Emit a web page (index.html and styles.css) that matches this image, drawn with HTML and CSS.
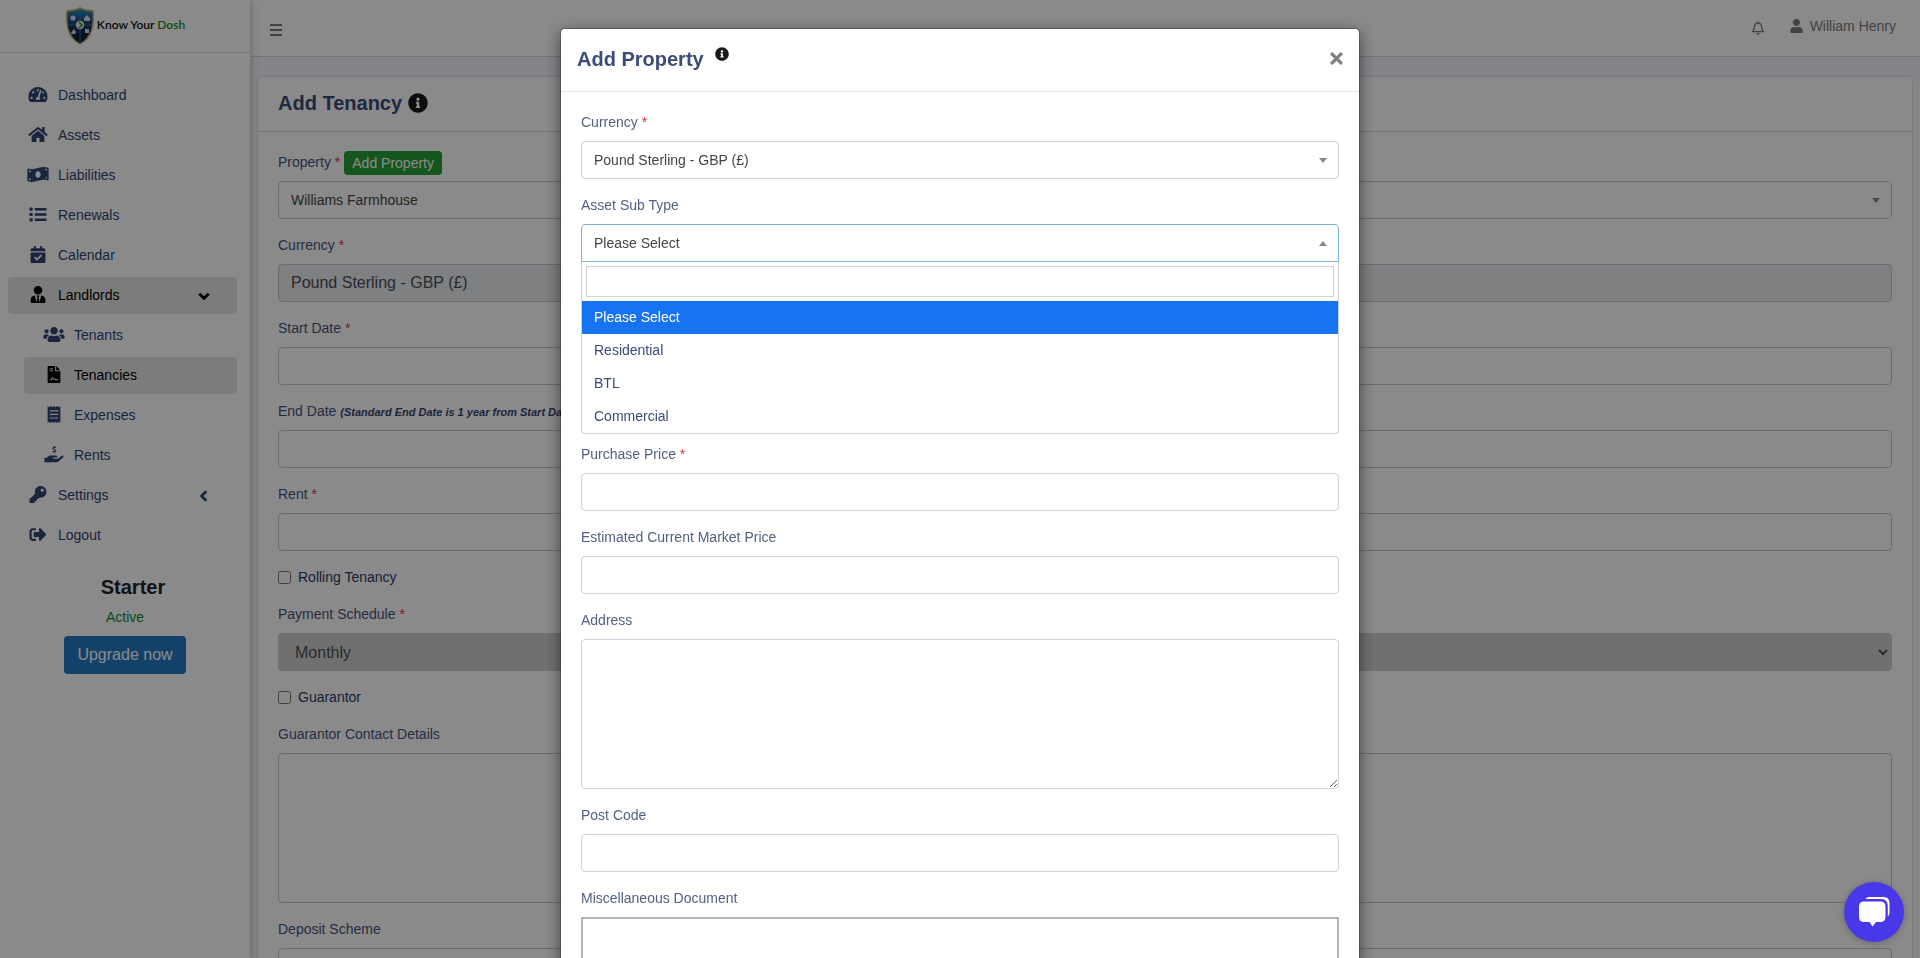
FILE: index.html
```html
<!DOCTYPE html>
<html lang="en">
  <head>
    <meta charset="utf-8" />
    <meta name="viewport" content="width=device-width, initial-scale=1" />
    <title>Know Your Dosh | Add Tenancy</title>
    <link rel="stylesheet" href="styles.css" />
  </head>
  <body class="modal-open">
    <svg class="sprite" aria-hidden="true">
      <symbol id="i-info" viewBox="0 0 512 512">
        <path d="M256 8C119.043 8 8 119.083 8 256c0 136.997 111.043 248 248 248s248-111.003 248-248C504 119.083 392.957 8 256 8zm0 110c23.196 0 42 18.804 42 42s-18.804 42-42 42-42-18.804-42-42 18.804-42 42-42zm56 254c0 6.627-5.373 12-12 12h-88c-6.627 0-12-5.373-12-12v-24c0-6.627 5.373-12 12-12h12v-64h-12c-6.627 0-12-5.373-12-12v-24c0-6.627 5.373-12 12-12h64c6.627 0 12 5.373 12 12v100h12c6.627 0 12 5.373 12 12v24z" />
      </symbol>
    </svg>

    <div class="wrapper">
      <!-- Sidebar -->
      <aside class="sidebar">
        <a href="#" class="brand">
          <svg class="brand-logo" viewBox="0 0 30 38">
            <defs>
              <linearGradient id="shield" x1="0" y1="0" x2="0" y2="1">
                <stop offset="0" stop-color="#2b8fc4" />
                <stop offset="0.5" stop-color="#16335f" />
                <stop offset="1" stop-color="#0c1430" />
              </linearGradient>
            </defs>
            <path d="M15 1c4 2 8 3 13 3 1 13 0 26-13 33C2 30 1 17 2 4c5 0 9-1 13-3z" fill="url(#shield)" stroke="#cdb568" stroke-width="1.4" />
            <path d="M15 2v34M3 18h24" stroke="#4d9dbd" stroke-width="0.6" />
            <circle cx="8" cy="11" r="2.6" fill="#c9dcf5" />
            <path d="M19 11l3-3 3 3v3h-6z" fill="#c9dcf5" />
            <path d="M6 26l3-4 2 3-1 2H6z" fill="#c9dcf5" />
            <rect x="20" y="22" width="4" height="4" fill="#c9dcf5" />
            <circle cx="15" cy="18" r="4.2" fill="#e4efe0" />
            <path d="M14 15l3 3-3 3" fill="none" stroke="#3a8a34" stroke-width="1.6" />
          </svg>
          <span class="brand-text">Know Your <span class="brand-green">Dosh</span></span>
        </a>

        <nav>
          <ul class="nav">
            <li>
              <a href="#" class="nav-link">
                <svg class="nav-icon" viewBox="0 0 576 512"><path d="M288 32C128.94 32 0 160.94 0 320c0 52.8 14.25 102.26 39.06 144.8 5.61 9.62 16.3 15.2 27.44 15.2h443c11.14 0 21.83-5.58 27.44-15.2C561.75 422.26 576 372.8 576 320c0-159.06-128.94-288-288-288zm0 64c14.71 0 26.58 10.13 30.32 23.65-1.11 2.26-2.64 4.23-3.45 6.67l-9.22 27.67c-5.13 3.49-10.97 6.01-17.64 6.01-17.67 0-32-14.33-32-32S270.33 96 288 96zM96 384c-17.67 0-32-14.33-32-32s14.33-32 32-32 32 14.33 32 32-14.33 32-32 32zm48-160c-17.67 0-32-14.33-32-32s14.33-32 32-32 32 14.33 32 32-14.33 32-32 32zm246.77-72.41l-61.33 184C343.13 347.33 352 364.54 352 384c0 11.72-3.38 22.55-8.88 32H232.88c-5.5-9.45-8.88-20.28-8.88-32 0-33.94 26.5-61.43 59.9-63.59l61.34-184.01c4.17-12.56 17.73-19.45 30.36-15.17 12.57 4.19 19.35 17.79 15.17 30.36zm14.66 57.2l15.52-46.55c3.47-1.29 7.13-2.23 11.05-2.23 17.67 0 32 14.33 32 32s-14.33 32-32 32c-11.38-.01-20.89-6.28-26.57-15.22zM480 384c-17.67 0-32-14.33-32-32s14.33-32 32-32 32 14.33 32 32-14.33 32-32 32z" /></svg>
                <span>Dashboard</span>
              </a>
            </li>
            <li>
              <a href="#" class="nav-link">
                <svg class="nav-icon" viewBox="0 0 576 512"><path d="M280.37 148.26L96 300.11V464a16 16 0 0 0 16 16l112.06-.29a16 16 0 0 0 15.92-16V368a16 16 0 0 1 16-16h64a16 16 0 0 1 16 16v95.64a16 16 0 0 0 16 16.05L464 480a16 16 0 0 0 16-16V300L295.67 148.26a12.19 12.19 0 0 0-15.3 0zM571.6 251.47L488 182.56V44.05a12 12 0 0 0-12-12h-56a12 12 0 0 0-12 12v72.61L318.47 43a48 48 0 0 0-61 0L4.34 251.47a12 12 0 0 0-1.6 16.9l25.5 31A12 12 0 0 0 45.15 301l235.22-193.74a12.19 12.19 0 0 1 15.3 0L530.9 301a12 12 0 0 0 16.9-1.6l25.5-31a12 12 0 0 0-1.7-16.93z" /></svg>
                <span>Assets</span>
              </a>
            </li>
            <li>
              <a href="#" class="nav-link">
                <svg class="nav-icon" viewBox="0 0 640 512"><path d="M621.16 54.46C582.37 38.19 543.55 32 504.75 32c-123.17-.01-246.33 62.34-369.5 62.34-30.89 0-61.76-3.92-92.65-13.72-3.47-1.1-6.95-1.62-10.35-1.62C15.04 79 0 92.32 0 110.81v317.26c0 12.63 7.23 24.6 18.84 29.46C57.63 473.81 96.45 480 135.25 480c123.17 0 246.34-62.35 369.51-62.35 30.89 0 61.76 3.92 92.65 13.72 3.47 1.1 6.95 1.62 10.35 1.62 17.21 0 32.25-13.32 32.25-31.81V83.93c-.01-12.64-7.24-24.6-18.85-29.47zM48 132.22c20.12 5.04 41.12 7.57 62.72 8.93C104.84 170.54 79 192.69 48 192.69v-60.47zm0 285v-47.78c34.37 0 62.18 27.27 63.71 61.4-22.53-1.81-43.59-6.31-63.71-13.62zM320 352c-44.19 0-80-42.99-80-96 0-53.02 35.82-96 80-96s80 42.98 80 96c0 53.03-35.83 96-80 96zm272 27.78c-17.52-4.39-35.71-6.85-54.32-8.44 5.87-26.08 27.5-45.88 54.32-49.28v57.72zm0-236.11c-30.89-3.91-54.86-29.7-55.81-61.55 19.54 2.17 38.09 6.23 55.81 12.66v48.89z" /></svg>
                <span>Liabilities</span>
              </a>
            </li>
            <li>
              <a href="#" class="nav-link">
                <svg class="nav-icon" viewBox="0 0 512 512"><path d="M16 48h64a16 16 0 0 1 16 16v64a16 16 0 0 1-16 16H16a16 16 0 0 1-16-16V64a16 16 0 0 1 16-16zm0 160h64a16 16 0 0 1 16 16v64a16 16 0 0 1-16 16H16a16 16 0 0 1-16-16v-64a16 16 0 0 1 16-16zm0 160h64a16 16 0 0 1 16 16v64a16 16 0 0 1-16 16H16a16 16 0 0 1-16-16v-64a16 16 0 0 1 16-16zM160 58h336a16 16 0 0 1 16 16v44a16 16 0 0 1-16 16H160V58zm0 160h336a16 16 0 0 1 16 16v44a16 16 0 0 1-16 16H160v-76zm0 160h336a16 16 0 0 1 16 16v44a16 16 0 0 1-16 16H160v-76z" /></svg>
                <span>Renewals</span>
              </a>
            </li>
            <li>
              <a href="#" class="nav-link">
                <svg class="nav-icon" viewBox="0 0 448 512"><path fill-rule="evenodd" d="M436 160H12c-6.627 0-12-5.373-12-12v-36c0-26.51 21.49-48 48-48h48V12c0-6.627 5.373-12 12-12h40c6.627 0 12 5.373 12 12v52h128V12c0-6.627 5.373-12 12-12h40c6.627 0 12 5.373 12 12v52h48c26.51 0 48 21.49 48 48v36c0 6.627-5.373 12-12 12zM12 192h424c6.627 0 12 5.373 12 12v260c0 26.51-21.49 48-48 48H48c-26.51 0-48-21.49-48-48V204c0-6.627 5.373-12 12-12zM104 352l90 92 152-150-36-37-116 114-53-54z" /></svg>
                <span>Calendar</span>
              </a>
            </li>
            <li>
              <a href="#" class="nav-link active">
                <svg class="nav-icon" viewBox="0 0 448 512"><path d="M224 256c70.7 0 128-57.3 128-128S294.7 0 224 0 96 57.3 96 128s57.3 128 128 128zm95.8 32.6L272 480l-32-136 32-56h-96l32 56-32 136-47.8-191.4C56.9 292 0 350.3 0 422.4V464c0 26.5 21.5 48 48 48h352c26.5 0 48-21.5 48-48v-41.6c0-72.1-56.9-130.4-128.2-133.8z" /></svg>
                <span>Landlords</span>
                <svg class="nav-arrow" viewBox="0 0 12 12"><path d="M2 4l4 4 4-4" /></svg>
              </a>
              <ul class="nav nav-sub">
                <li>
                  <a href="#" class="nav-link">
                    <svg class="nav-icon" viewBox="0 0 640 512"><path d="M96 224c35.3 0 64-28.7 64-64s-28.7-64-64-64-64 28.7-64 64 28.7 64 64 64zm448 0c35.3 0 64-28.7 64-64s-28.7-64-64-64-64 28.7-64 64 28.7 64 64 64zm32 32h-64c-17.6 0-33.5 7.1-45.1 18.6 40.3 22.1 68.9 62 75.1 109.4h66c17.7 0 32-14.3 32-32v-32c0-35.3-28.7-64-64-64zm-256 0c61.9 0 112-50.1 112-112S381.9 32 320 32 208 82.1 208 144s50.1 112 112 112zm76.8 32h-8.3c-20.8 10-43.9 16-68.5 16s-47.6-6-68.5-16h-8.3C179.6 288 128 339.6 128 403.2V432c0 26.5 21.5 48 48 48h288c26.5 0 48-21.5 48-48v-28.8c0-63.6-51.6-115.2-115.2-115.2zm-223.7-13.4C161.5 263.1 145.6 256 128 256H64c-35.3 0-64 28.7-64 64v32c0 17.7 14.3 32 32 32h65.9c6.3-47.4 34.9-87.3 75.2-109.4z" /></svg>
                    <span>Tenants</span>
                  </a>
                </li>
                <li>
                  <a href="#" class="nav-link active">
                    <svg class="nav-icon" viewBox="0 0 384 512"><path fill-rule="evenodd" d="M0 24A24 24 0 0 1 24 0h200v136a24 24 0 0 0 24 24h136v328a24 24 0 0 1-24 24H24a24 24 0 0 1-24-24zM256 0l128 128H256zM64 64v32h96V64zm0 64v32h96v-32zM64 400v32h60l22-58 28 50 34-22 20 30h92v-32h-74l-30-38-36 24-40-70-36 84z" /></svg>
                    <span>Tenancies</span>
                  </a>
                </li>
                <li>
                  <a href="#" class="nav-link">
                    <svg class="nav-icon" viewBox="0 0 384 512"><path fill-rule="evenodd" d="M0 0l48 36L96 0l48 36 48-36 48 36 48-36 48 36 48-36v512l-48-36-48 36-48-36-48 36-48-36-48 36-48-36-48 36zM64 128v34h256v-34zm0 108v34h256v-34zm0 108v34h256v-34z" /></svg>
                    <span>Expenses</span>
                  </a>
                </li>
                <li>
                  <a href="#" class="nav-link">
                    <svg class="nav-icon" viewBox="0 0 576 512"><path d="M8 352h56l46-38c24-19 52-29 82-29h160c20 0 35 18 32 38-3 16-18 26-34 26h-78a16 16 0 0 0 0 32h118c14 0 28-5 39-14l93-74c14-11 34-11 46 1 13 13 11 34-3 45L414 472a64 64 0 0 1-40 14H8a8 8 0 0 1-8-8V360a8 8 0 0 1 8-8z" /><path d="M338 52c-20-16-82-18-84 20-2 44 88 26 86 70-2 36-64 38-90 16M296 0v44M296 168v48" fill="none" stroke="currentColor" stroke-width="34" /></svg>
                    <span>Rents</span>
                  </a>
                </li>
              </ul>
            </li>
            <li>
              <a href="#" class="nav-link">
                <svg class="nav-icon" viewBox="0 0 512 512"><path d="M512 176.001C512 273.203 433.202 352 336 352c-11.22 0-22.19-1.062-32.827-3.069l-24.012 27.014A23.999 23.999 0 0 1 261.223 384H224v40c0 13.255-10.745 24-24 24h-40v40c0 13.255-10.745 24-24 24H24c-13.255 0-24-10.745-24-24v-78.059c0-6.365 2.529-12.47 7.029-16.971l161.802-161.802C163.108 213.814 160 195.271 160 176 160 78.798 238.797.001 335.999 0 433.488-.001 512 78.511 512 176.001zM336 128c0 26.51 21.49 48 48 48s48-21.49 48-48-21.49-48-48-48-48 21.49-48 48z" /></svg>
                <span>Settings</span>
                <svg class="nav-arrow" viewBox="0 0 12 12"><path d="M8 2L4 6l4 4" /></svg>
              </a>
            </li>
            <li>
              <a href="#" class="nav-link">
                <svg class="nav-icon" viewBox="0 0 512 512"><path d="M497 273L329 441c-15 15-41 4.5-41-17v-96H152c-13.3 0-24-10.7-24-24v-96c0-13.3 10.7-24 24-24h136V88c0-21.4 25.9-32 41-17l168 168c9.3 9.4 9.3 24.6 0 34zM192 436v-40c0-6.6-5.4-12-12-12H96c-17.7 0-32-14.3-32-32V160c0-17.7 14.3-32 32-32h84c6.6 0 12-5.4 12-12V76c0-6.6-5.4-12-12-12H96c-53 0-96 43-96 96v192c0 53 43 96 96 96h84c6.6 0 12-5.4 12-12z" /></svg>
                <span>Logout</span>
              </a>
            </li>
          </ul>
        </nav>

        <div class="plan">
          <h2 class="plan-name">Starter</h2>
          <p class="plan-status">Active</p>
          <button type="button" class="btn btn-primary">Upgrade now</button>
        </div>
      </aside>

      <div class="main">
        <!-- Navbar -->
        <header class="topbar">
          <button type="button" class="icon-btn" aria-label="Toggle menu">
            <svg class="menu-icon" viewBox="0 0 12 12"><path d="M0 1h12M0 6h12M0 11h12" stroke="currentColor" stroke-width="2" /></svg>
          </button>
          <div class="topbar-right">
            <button type="button" class="icon-btn" aria-label="Notifications">
              <svg class="bell-icon" viewBox="0 0 448 512"><path d="M439.39 362.29c-19.32-20.76-55.47-51.99-55.47-154.29 0-77.7-54.48-139.9-127.94-155.16V32c0-17.67-14.32-32-31.98-32s-31.98 14.33-31.98 32v20.84C118.56 68.1 64.08 130.3 64.08 208c0 102.3-36.15 133.53-55.47 154.29-6 6.45-8.66 14.16-8.61 21.71.11 16.4 12.98 32 32.1 32h383.8c19.12 0 32-15.6 32.1-32 .05-7.55-2.61-15.27-8.61-21.71zM67.53 368c21.22-27.97 44.42-74.33 44.53-159.42 0-.2-.06-.38-.06-.58 0-61.86 50.14-112 112-112s112 50.14 112 112c0 .2-.06.38-.06.58.11 85.1 23.31 131.46 44.53 159.42H67.53zM224 512c35.32 0 63.97-28.65 63.97-64H160.03c0 35.35 28.65 64 63.97 64z" /></svg>
            </button>
            <a href="#" class="user-link">
              <svg class="user-icon" viewBox="0 0 448 512"><path d="M224 256c70.7 0 128-57.3 128-128S294.7 0 224 0 96 57.3 96 128s57.3 128 128 128zm89.6 32h-16.7c-22.2 10.2-46.9 16-72.9 16s-50.6-5.8-72.9-16h-16.7C60.2 288 0 348.2 0 422.4V464c0 26.5 21.5 48 48 48h352c26.5 0 48-21.5 48-48v-41.6c0-74.2-60.2-134.4-134.4-134.4z" /></svg>
              William Henry
            </a>
          </div>
        </header>

        <!-- Tenancy form -->
        <section class="card">
          <div class="card-header">
            <h1 class="title">Add Tenancy</h1>
            <svg class="info-icon"><use href="#i-info" /></svg>
          </div>
          <form class="card-body">
            <div class="form-group">
              <div class="label-row">
                <label for="property">Property <span class="req">*</span></label>
                <button type="button" class="btn btn-success btn-xs">Add Property</button>
              </div>
              <div class="select-wrap">
                <select id="property" class="form-control select2">
                  <option>Williams Farmhouse</option>
                </select>
              </div>
            </div>
            <div class="form-group">
              <label for="currency">Currency <span class="req">*</span></label>
              <input id="currency" class="form-control" type="text" value="Pound Sterling - GBP (£)" readonly />
            </div>
            <div class="form-group">
              <label for="startDate">Start Date <span class="req">*</span></label>
              <input id="startDate" class="form-control" type="text" />
            </div>
            <div class="form-group">
              <label for="endDate">End Date <em class="hint">(Standard End Date is 1 year from Start Date)</em></label>
              <input id="endDate" class="form-control" type="text" />
            </div>
            <div class="form-group">
              <label for="rent">Rent <span class="req">*</span></label>
              <input id="rent" class="form-control" type="text" />
            </div>
            <div class="form-group form-check">
              <input id="rolling" type="checkbox" />
              <label for="rolling">Rolling Tenancy</label>
            </div>
            <div class="form-group">
              <label for="schedule">Payment Schedule <span class="req">*</span></label>
              <select id="schedule" class="form-control schedule">
                <option>Monthly</option>
              </select>
            </div>
            <div class="form-group form-check">
              <input id="guarantor" type="checkbox" />
              <label for="guarantor">Guarantor</label>
            </div>
            <div class="form-group">
              <label for="guarantorDetails">Guarantor Contact Details</label>
              <textarea id="guarantorDetails" class="form-control"></textarea>
            </div>
            <div class="form-group">
              <label for="deposit">Deposit Scheme</label>
              <input id="deposit" class="form-control" type="text" />
            </div>
          </form>
        </section>
      </div>
    </div>

    <!-- Add property modal -->
    <div class="modal">
      <div class="modal-dialog" role="dialog" aria-labelledby="modalTitle">
        <div class="modal-header">
          <h2 class="title" id="modalTitle">Add Property</h2>
          <svg class="info-icon info-icon-sm"><use href="#i-info" /></svg>
          <button type="button" class="icon-btn close" aria-label="Close">
            <svg class="close-icon" viewBox="0 0 12 12"><path d="M1 1l10 10M11 1L1 11" /></svg>
          </button>
        </div>
        <form class="modal-body">
          <div class="form-group">
            <label for="mCurrency">Currency <span class="req">*</span></label>
            <div class="select-wrap">
              <select id="mCurrency" class="form-control select2">
                <option>Pound Sterling - GBP (£)</option>
              </select>
            </div>
          </div>
          <div class="form-group open">
            <label for="subType">Asset Sub Type</label>
            <div class="select-wrap">
              <select id="subType" class="form-control select2">
                <option>Please Select</option>
              </select>
            </div>
            <div class="dropdown">
              <div class="dropdown-search">
                <input type="search" aria-label="Search asset sub type" />
              </div>
              <ul class="dropdown-list" role="listbox" aria-label="Asset Sub Type">
                <li role="option" class="highlighted" aria-selected="true">Please Select</li>
                <li role="option">Residential</li>
                <li role="option">BTL</li>
                <li role="option">Commercial</li>
              </ul>
            </div>
          </div>
          <div class="form-group">
            <label for="price">Purchase Price <span class="req">*</span></label>
            <input id="price" class="form-control" type="text" />
          </div>
          <div class="form-group">
            <label for="marketPrice">Estimated Current Market Price</label>
            <input id="marketPrice" class="form-control" type="text" />
          </div>
          <div class="form-group">
            <label for="address">Address</label>
            <textarea id="address" class="form-control"></textarea>
          </div>
          <div class="form-group">
            <label for="postCode">Post Code</label>
            <input id="postCode" class="form-control" type="text" />
          </div>
          <div class="form-group">
            <label id="miscLabel">Miscellaneous Document</label>
            <div class="dropzone" role="group" aria-labelledby="miscLabel"></div>
          </div>
        </form>
      </div>
    </div>

    <button type="button" class="chat" aria-label="Open chat">
      <svg class="chat-icon" viewBox="0 0 32 32">
        <path d="M7.500 3C8.500 1.500 10 1 12 1h13c4.500 0 6.500 2 6.500 6.500v8c0 2.500-.5 4-1.700 5V10.500c0-5-2.300-7.500-7.300-7.500z" />
        <path d="M7 5.500h14.500c4.500 0 6 1.500 6 6v8.500c0 4.500-1.500 6-6 6H18L14.500 30.500 11.500 26H7c-4.500 0-6-1.500-6-6v-8.500c0-4.500 1.500-6 6-6z" />
      </svg>
    </button>
  </body>
</html>
```
FILE: styles.css
```css
* {
  box-sizing: border-box;
}

body {
  margin: 0;
  font-family: "Liberation Sans", Arial, sans-serif;
  font-size: 14px;
  line-height: 21px;
  color: #3a4c78;
  background-color: #f4f6fc;
}

.modal-open {
  height: 100vh;
  overflow: hidden;
}

h1,
h2,
p,
ul {
  margin: 0;
  padding: 0;
}

ul {
  list-style: none;
}

a {
  color: inherit;
  text-decoration: none;
}

button,
input,
select,
textarea {
  font-family: inherit;
}

.sprite {
  display: none;
}

.wrapper {
  display: flex;
  height: 100vh;
  overflow: hidden;
}

/* Sidebar */
.sidebar {
  flex: 0 0 250px;
  background-color: #fff;
  box-shadow: 0 0 8px rgba(40, 50, 90, 0.35);
  z-index: 1;
}

.brand {
  display: flex;
  justify-content: center;
  align-items: center;
  gap: 2px;
  height: 53px;
  border-bottom: 1px solid #d8dadd;
}

.brand-logo {
  width: 30px;
  height: 38px;
}

.brand-text {
  padding-bottom: 4px;
  font-family: Lato, sans-serif;
  font-size: 12px;
  font-weight: 600;
  color: #111;
}

.brand-green {
  color: #128a12;
}

.nav {
  padding: 24px 13px 0 8px;
}

.nav-sub {
  padding: 0 0 0 16px;
}

.nav-link {
  display: flex;
  align-items: center;
  gap: 8px;
  height: 37px;
  margin-bottom: 3px;
  padding: 0 26px 0 18px;
  border-radius: 4px;
  color: #2f4574;
}

.nav-link.active {
  background-color: #e6e6e6;
  color: #000;
}

.nav-icon {
  width: 24px;
  height: 20px;
  padding-bottom: 3px;
  fill: currentColor;
}

.nav-arrow {
  width: 14px;
  height: 14px;
  margin-left: auto;
  fill: none;
  stroke: currentColor;
  stroke-width: 2.4;
}

.plan {
  display: flex;
  flex-direction: column;
  align-items: center;
  padding-top: 18px;
}

.plan-name {
  padding-left: 16px;
  font-size: 20px;
  line-height: 24px;
  color: #212529;
}

.plan-status {
  margin: 8px 0;
  color: #118a34;
}

/* Buttons */
.btn {
  border: 0;
  border-radius: 4px;
  color: #fff;
  cursor: pointer;
}

.btn-primary {
  height: 38px;
  padding: 0 13px;
  background-color: #2479c4;
  font-size: 16px;
}

.btn-success {
  background-color: #28a03a;
}

.btn-xs {
  height: 24px;
  padding: 0 8px;
  font-size: 14px;
}

.icon-btn {
  display: flex;
  padding: 0;
  border: 0;
  background: none;
  color: inherit;
  cursor: pointer;
}

/* Top bar */
.main {
  flex: 1;
  min-width: 0;
}

.topbar {
  display: flex;
  justify-content: space-between;
  align-items: center;
  height: 57px;
  padding: 0 24px 0 20px;
  background-color: #fff;
  border-bottom: 1px solid #d3d6dc;
  color: #7b7b7b;
}

.menu-icon {
  width: 12px;
  height: 12px;
}

.topbar .icon-btn {
  padding-top: 3px;
}

.topbar-right {
  display: flex;
  align-items: center;
  gap: 26px;
  padding-bottom: 4px;
}

.bell-icon {
  width: 12px;
  height: 14px;
  fill: currentColor;
}

.user-link {
  display: flex;
  align-items: center;
  gap: 7px;
}

.user-icon {
  width: 13px;
  height: 14px;
  fill: currentColor;
}

/* Card */
.card {
  margin: 20px 8px;
  background-color: #fff;
  border-radius: 4px;
  box-shadow: 0 0 3px rgba(0, 0, 0, 0.2);
}

.card-header {
  display: flex;
  align-items: center;
  gap: 6px;
  height: 55px;
  padding: 0 20px 2px;
  border-bottom: 1px solid #d5d7da;
}

.card-body {
  padding: 20px;
}

.title {
  font-size: 20px;
  line-height: 24px;
  color: #3a4c78;
}

.info-icon {
  width: 20px;
  height: 20px;
  fill: #16181b;
}

.info-icon-sm {
  width: 14px;
  height: 14px;
}

/* Forms */
.form-group {
  margin-bottom: 16px;
}

.form-group > label {
  display: block;
  margin-bottom: 8px;
}

.label-row {
  display: flex;
  align-items: center;
  gap: 4px;
  height: 21px;
  margin-bottom: 8px;
}

.form-group label {
  color: #536180;
}

.card-body label {
  color: #45547c;
}

.req {
  color: #dc2f3c;
}

.hint {
  font-size: 11px;
  line-height: 11px;
  font-weight: 700;
  color: #33436c;
}

.form-control {
  display: block;
  width: 100%;
  height: 38px;
  padding: 0 12px;
  border: 1px solid #ced4da;
  border-radius: 4px;
  background-color: #fff;
  font-size: 16px;
  color: #495057;
}

.card-body .form-control {
  border-color: #c4c8cd;
}

.form-control[readonly] {
  background-color: #e9ecef;
}

textarea.form-control {
  height: 150px;
}

.select-wrap {
  position: relative;
}

.select2 {
  appearance: none;
  font-size: 14px;
  color: #444;
}

.select-wrap::after {
  content: "";
  position: absolute;
  top: 17px;
  right: 12px;
  border: 4px solid transparent;
  border-top: 5px solid #888;
  border-bottom: 0;
}

.card-body .schedule {
  padding-left: 12px;
  border-color: #d0d0d0;
  background-color: #d0d0d0;
}

.form-check {
  display: flex;
  align-items: center;
  gap: 7px;
}

.form-check input {
  width: 13px;
  height: 13px;
  margin: 0;
}

.form-group.form-check label {
  margin: 0;
  color: #2a3a66;
}

/* Opened select */
.open {
  margin-bottom: 10px;
}

.open .form-control {
  border-color: #80b0d8;
  border-radius: 4px 4px 0 0;
}

.open .select-wrap::after {
  border-top: 0;
  border-bottom: 5px solid #888;
}

.dropdown {
  border: 1px solid #ced4da;
  border-top: 0;
  border-radius: 0 0 4px 4px;
  background-color: #fff;
}

.dropdown-search {
  padding: 4px;
}

.dropdown-search input {
  display: block;
  width: 100%;
  height: 31px;
  border: 1px solid #ced4da;
  outline: 0;
}

.dropdown-list li {
  padding: 6px 12px;
  color: #3a4c78;
}

.dropdown-list .highlighted {
  background-color: #1873f2;
  color: #fff;
}

/* Modal */
.modal {
  position: fixed;
  inset: 0;
  z-index: 10;
  overflow: hidden;
  background-color: rgba(0, 0, 0, 0.46);
}

.modal-dialog {
  max-width: 800px;
  margin: 28px auto;
  border: 1px solid rgba(0, 0, 0, 0.2);
  border-radius: 5px;
  background-color: #fff;
  background-clip: padding-box;
  box-shadow: 0 4px 16px rgba(0, 0, 0, 0.5);
}

.modal-header {
  display: flex;
  align-items: flex-start;
  gap: 11px;
  padding: 18px 16px 20px;
  border-bottom: 1px solid #e4e7ea;
}

.close {
  margin-left: auto;
  padding-top: 5px;
  color: #808080;
}

.close-icon {
  width: 13px;
  height: 13px;
  fill: none;
  stroke: currentColor;
  stroke-width: 3;
}

.modal-body {
  padding: 20px;
}

.dropzone {
  min-height: 150px;
  border: 2px solid #b3b3b3;
}

/* Chat widget */
.chat {
  position: fixed;
  right: 16px;
  bottom: 16px;
  z-index: 20;
  display: flex;
  justify-content: center;
  align-items: center;
  padding: 0;
  width: 60px;
  height: 60px;
  border: 0;
  border-radius: 50%;
  background-color: #4938e8;
  box-shadow: 0 1px 6px rgba(0, 0, 0, 0.25);
}

.chat-icon {
  width: 32px;
  height: 32px;
  fill: #fff;
}
```
